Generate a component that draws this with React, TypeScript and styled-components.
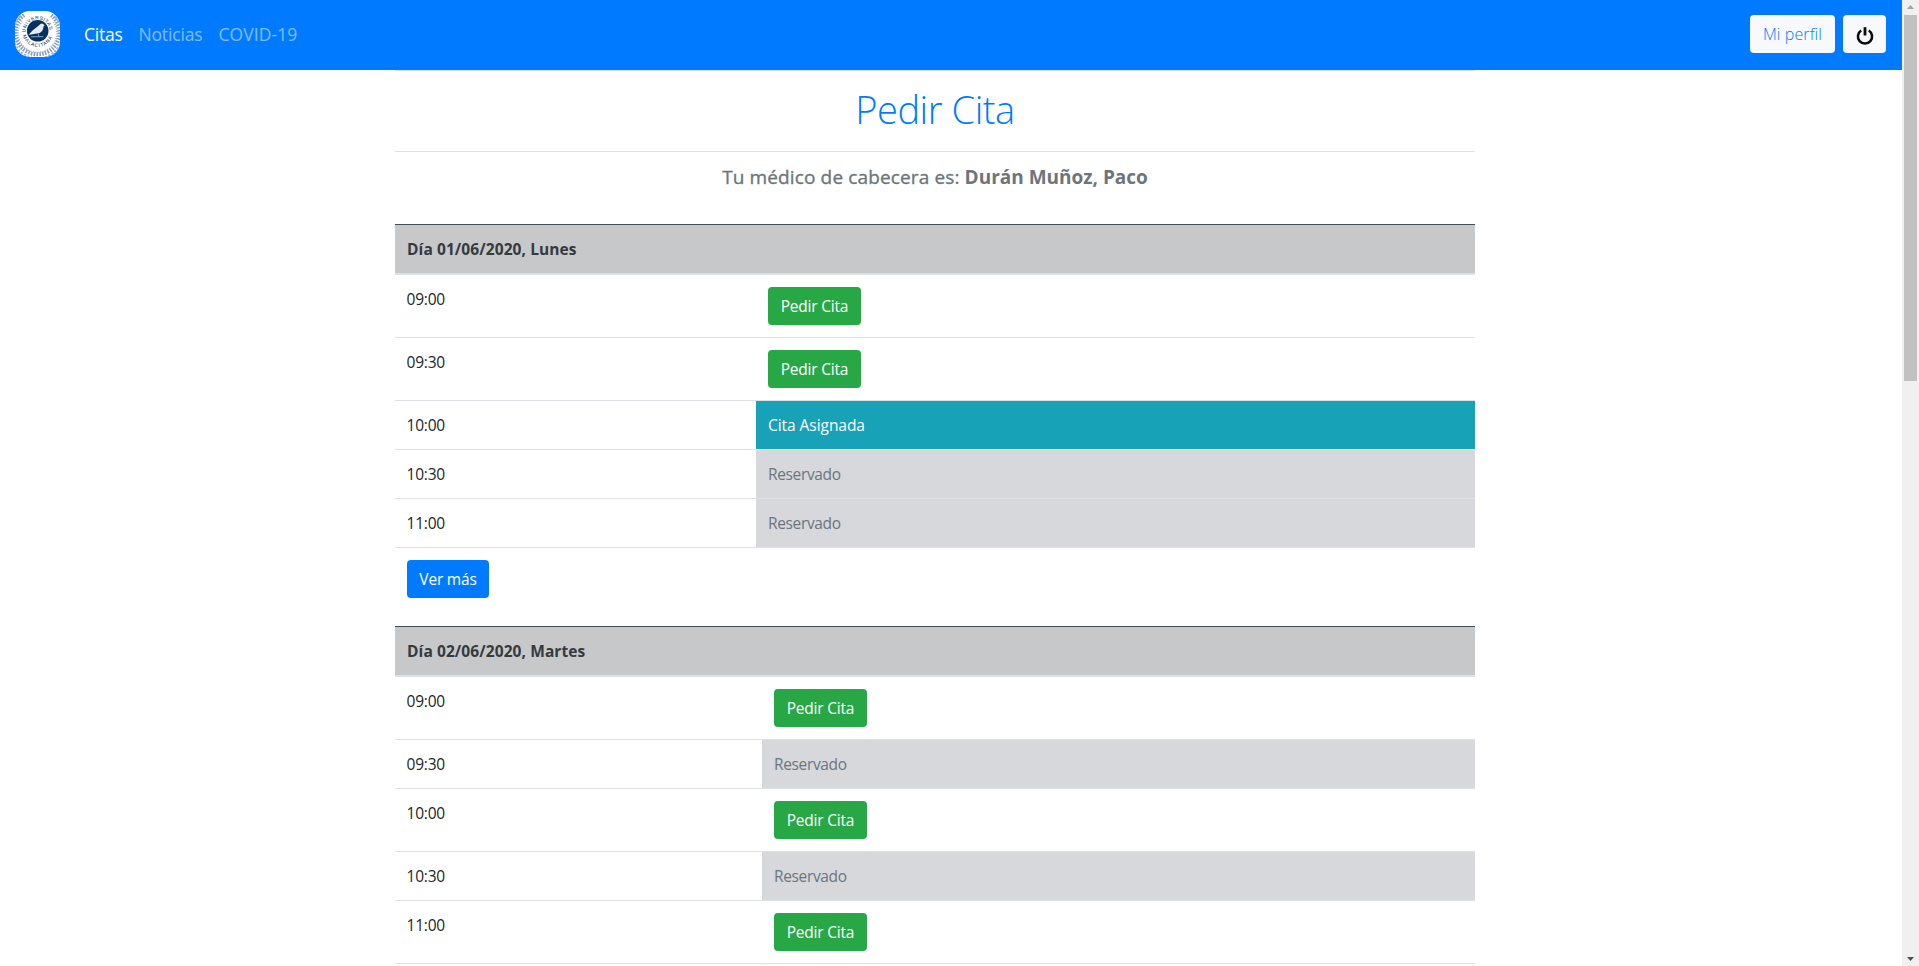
import React from "react";
import styled, { createGlobalStyle } from "styled-components";

const GlobalStyle = createGlobalStyle`
  * { box-sizing: border-box; }
  html, body { margin: 0; height: 100%; overflow: hidden; }
  body {
    font-family: "Segoe UI", "Open Sans", "Noto Sans", sans-serif;
    font-size: 15.5px;
    line-height: 24px;
    color: #212529;
    background: #fff;
  }
`;

const Window = styled.div`
  display: flex;
  height: 966px;
  overflow: hidden;
`;

const Page = styled.div`
  flex: 1;
  min-width: 0;
  overflow: hidden;
`;

const Navbar = styled.nav`
  display: flex;
  align-items: center;
  height: 70px;
  padding: 0 16px 2px 15px;
  background: #007bff;
`;

const Logo = styled.svg`
  display: block;
  width: 45px;
  height: 46px;
  border-radius: 15px;
`;

const NavLinks = styled.div`
  display: flex;
  gap: 16px;
  flex: 1;
  margin-left: 24px;
`;

const NavLink = styled.a<{ $active?: boolean; $spacing: number }>`
  font-size: 17.5px;
  letter-spacing: ${(p) => p.$spacing}px;
  color: ${(p) => (p.$active ? "#fff" : "rgba(255, 255, 255, 0.5)")};
`;

const NavActions = styled.div`
  display: flex;
  gap: 8px;
`;

const NavButton = styled.button<{ $width: number }>`
  display: flex;
  align-items: center;
  justify-content: center;
  width: ${(p) => p.$width}px;
  height: 38px;
  padding: 0;
  border: 0;
  border-radius: 4px;
  background: #f8f9fa;
  color: #007bff;
  font: 300 16px/24px "Open Sans", sans-serif;
  letter-spacing: 0.1px;
`;

const PowerIcon = styled.svg`
  display: block;
  width: 18px;
  height: 20px;
  margin-top: 3px;
`;

const Content = styled.main`
  width: 1080px;
  margin-left: 395px;
`;

const Title = styled.h1`
  height: 82px;
  margin: 0;
  padding-top: 14px;
  border-top: 1px solid #dee2e6;
  border-bottom: 1px solid #dee2e6;
  text-align: center;
  font-size: 38px;
  font-weight: 300;
  line-height: 48px;
  letter-spacing: -0.45px;
  color: #007bff;
`;

const Doctor = styled.h5`
  margin: 0;
  height: 72px;
  padding-top: 13px;
  text-align: center;
  font-size: 19px;
  font-weight: 500;
  line-height: 24px;
  letter-spacing: 0.13px;
  -webkit-text-stroke: 0.35px #6c757d;
  color: #6c757d;

  b {
    letter-spacing: 0;
    -webkit-text-stroke: 0;
  }
`;

const Day = styled.section`
  margin-bottom: 28px;
`;

const DayHeader = styled.header`
  height: 51px;
  padding: 12px;
  border-top: 1px solid #454d55;
  border-bottom: 2px solid #dee2e6;
  background: #c6c8ca;
  color: #343a40;
  font-weight: 700;
  letter-spacing: 0.09px;
`;

const SlotRow = styled.div<{ $timeWidth: number }>`
  display: grid;
  grid-template-columns: ${(p) => p.$timeWidth}px 1fr;
  border-bottom: 1px solid #dee2e6;
`;

const Time = styled.div`
  padding: 12px 11.5px;
  letter-spacing: -0.2px;
`;

type Status = "libre" | "asignada" | "reservado";

const cellBackground = { libre: "transparent", asignada: "#17a2b8", reservado: "#d6d8db" };
const cellColor = { libre: "#212529", asignada: "#fff", reservado: "#6c757d" };
const cellSpacing = { libre: 0, asignada: -0.05, reservado: -0.35 };

const StatusCell = styled.div<{ $status: Status }>`
  padding: 12px;
  background: ${(p) => cellBackground[p.$status]};
  color: ${(p) => cellColor[p.$status]};
  letter-spacing: ${(p) => cellSpacing[p.$status]}px;
`;

const Button = styled.button<{ $color: string; $width: number }>`
  display: block;
  width: ${(p) => p.$width}px;
  height: 38px;
  padding: 0;
  border: 0;
  border-radius: 4px;
  background: ${(p) => p.$color};
  color: #fff;
  font: inherit;
  letter-spacing: -0.2px;
`;

const More = styled.div`
  padding: 12px 12px 0;
`;

const Scrollbar = styled.aside`
  display: flex;
  flex-direction: column;
  align-items: center;
  width: 17px;
  padding: 5px 0;
  background: #f0f0f0;
`;

const Arrow = styled.svg`
  display: block;
  width: 7px;
  height: 4px;
`;

const Thumb = styled.div`
  width: 13px;
  height: 366px;
  margin: 6px 0 auto;
  background: #c1c1c1;
`;

interface DayData {
  title: string;
  timeWidth: number;
  slots: [string, Status][];
  more?: boolean;
}

const days: DayData[] = [
  {
    title: "Día 01/06/2020, Lunes",
    timeWidth: 361,
    more: true,
    slots: [
      ["09:00", "libre"],
      ["09:30", "libre"],
      ["10:00", "asignada"],
      ["10:30", "reservado"],
      ["11:00", "reservado"],
    ],
  },
  {
    title: "Día 02/06/2020, Martes",
    timeWidth: 367,
    slots: [
      ["09:00", "libre"],
      ["09:30", "reservado"],
      ["10:00", "libre"],
      ["10:30", "reservado"],
      ["11:00", "libre"],
    ],
  },
];

function Crest() {
  return (
    <Logo viewBox="0 0 45 46">
      <rect width="45" height="46" fill="#fff" />
      <g fill="none">
        <path d="M9 4 A22 22 0 1 0 36 4" stroke="#8299b6" strokeWidth="4" strokeDasharray="1.5 1.3" />
        <path d="M5 5 A25 25 0 1 0 40 5" stroke="#a3b4ca" strokeWidth="3" strokeDasharray="2.2 1.5" />
        <path d="M7 10 A19.5 19.5 0 1 0 38 10" stroke="#9aaec6" strokeWidth="1.6" strokeDasharray="1 1.4" />
      </g>
      <circle cx="22.7" cy="20.5" r="17" fill="#fff" />
      <defs>
        <path id="crest-top" d="M10.75 21.5 A12 12 0 1 1 34.65 21.5" />
        <path id="crest-bottom" d="M7.7 24.5 A15.5 15.5 0 0 0 37.7 24.5" />
      </defs>
      <g fill="#0c3164" fontFamily="Liberation Sans, sans-serif" fontSize="5">
        <text><textPath href="#crest-top" textLength="37">UNIVERSITAS</textPath></text>
        <text><textPath href="#crest-bottom" textLength="39">MALACITANA</textPath></text>
      </g>
      <circle cx="22.7" cy="19.8" r="10.8" fill="#06305f" />
      <path d="M13.5 24 L17.5 19.5 L22 16 L25.2 13.2 Q27 11.6 28.4 13.3 L29.8 14.4 L28.5 15.2 Q28.6 19.8 24.6 22 L20.4 22.8 L16 23.4 Z" fill="#e5ecf3" />
      <path d="M16 25.7 H28.5 M23 22.5 L24 25.5" stroke="#aabbd0" strokeWidth="0.8" fill="none" />
    </Logo>
  );
}

export default function App() {
  return (
    <>
      <GlobalStyle />
      <Window>
        <Page>
          <Navbar>
            <Crest />
            <NavLinks>
              <NavLink $active $spacing={-0.25}>Citas</NavLink>
              <NavLink $spacing={-0.17}>Noticias</NavLink>
              <NavLink $spacing={0.1}>COVID-19</NavLink>
            </NavLinks>
            <NavActions>
              <NavButton $width={85}>Mi perfil</NavButton>
              <NavButton $width={43} aria-label="Salir">
                <PowerIcon viewBox="0 0 18 20" fill="none" stroke="#0b0b0b">
                  <path d="M5.2 4.5 A7.1 7.1 0 1 0 12.8 4.5" strokeWidth="2.5" />
                  <path d="M9 1.2 V9.5" strokeWidth="2.8" />
                </PowerIcon>
              </NavButton>
            </NavActions>
          </Navbar>
          <Content>
            <Title>Pedir Cita</Title>
            <Doctor>
              Tu médico de cabecera es: <b>Durán Muñoz, Paco</b>
            </Doctor>
            {days.map((day) => (
              <Day key={day.title}>
                <DayHeader>{day.title}</DayHeader>
                {day.slots.map(([time, status]) => (
                  <SlotRow key={time} $timeWidth={day.timeWidth}>
                    <Time>{time}</Time>
                    <StatusCell $status={status}>
                      {status === "libre" && <Button $color="#28a745" $width={93}>Pedir Cita</Button>}
                      {status === "asignada" && "Cita Asignada"}
                      {status === "reservado" && "Reservado"}
                    </StatusCell>
                  </SlotRow>
                ))}
                {day.more && (
                  <More>
                    <Button $color="#007bff" $width={82}>Ver más</Button>
                  </More>
                )}
              </Day>
            ))}
          </Content>
        </Page>
        <Scrollbar>
          <Arrow viewBox="0 0 7 4"><path d="M0 4 L3.5 0 L7 4Z" fill="#a3a3a3" /></Arrow>
          <Thumb />
          <Arrow viewBox="0 0 7 4"><path d="M0 0 L3.5 4 L7 0Z" fill="#505050" /></Arrow>
        </Scrollbar>
      </Window>
    </>
  );
}
